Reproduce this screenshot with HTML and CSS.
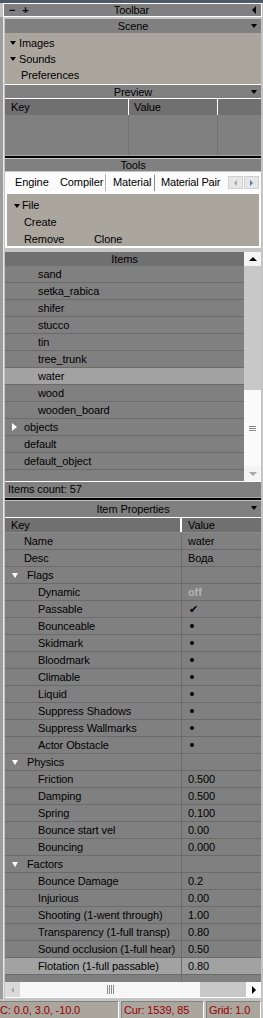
FILE: index.html
```html
<!DOCTYPE html>
<html lang="en">
<head>
    <meta charset="UTF-8">
    <title>Editor | Side Panel</title>
    <link rel="stylesheet" href="styles.css">
</head>
<body>
<div class="app">
    <div class="topline"></div>
    <div class="toolbar">
        <span class="tb-btns"><b>&minus;</b><b>+</b></span>
        <span class="tb-title">Toolbar</span>
        <span class="tri tri-left"></span>
    </div>

    <div class="dock">
        <div class="gap2"></div>
        <div class="hdr">Scene<span class="tri tri-down caret"></span></div>
        <div class="tree beige">
            <div class="tnode"><span class="tri tri-down"></span>Images</div>
            <div class="tnode"><span class="tri tri-down"></span>Sounds</div>
            <div class="tnode leaf">Preferences</div>
        </div>

        <div class="hdr hdr-top">Preview<span class="tri tri-down caret"></span></div>
        <div class="grid3 grid3-head">
            <div>Key</div><div>Value</div><div></div>
        </div>
        <div class="grid3 grid3-body">
            <div></div><div></div><div></div>
        </div>
        <div class="splitter"></div>

        <div class="hdr hdr-tools">Tools</div>
        <div class="tabs">
            <span class="tab t-engine">Engine</span>
            <span class="tab t-compiler">Compiler</span>
            <span class="tab t-material active">Material</span>
            <span class="tab t-pair">Material Pair</span>
            <span class="tab-arrows">
                <span class="tab-arrow"><span class="tri tri-left small grey"></span></span>
                <span class="tab-arrow"><span class="tri tri-right small blue"></span></span>
            </span>
        </div>
        <div class="tools-box beige">
            <div class="tnode"><span class="tri tri-down"></span>File</div>
            <div class="tnode sub">Create</div>
            <div class="tnode sub"><span class="cmd">Remove</span>Clone</div>
        </div>

        <div class="items">
            <div class="items-list">
                <div class="hdr hdr-dark">Items</div>
                <div class="row lvl1">sand</div>
                <div class="row lvl1">setka_rabica</div>
                <div class="row lvl1">shifer</div>
                <div class="row lvl1">stucco</div>
                <div class="row lvl1">tin</div>
                <div class="row lvl1">tree_trunk</div>
                <div class="row lvl1 selected">water</div>
                <div class="row lvl1">wood</div>
                <div class="row lvl1">wooden_board</div>
                <div class="row lvl0"><span class="tri tri-right white exp"></span>objects</div>
                <div class="row lvl0">default</div>
                <div class="row lvl0">default_object</div>
            </div>
            <div class="vscroll">
                <div class="sb-btn"><span class="tri tri-up"></span></div>
                <div class="sb-track"></div>
                <div class="sb-thumb"><span class="grip-h"></span></div>
                <div class="sb-btn"><span class="tri tri-down small grey"></span></div>
            </div>
        </div>
        <div class="count">Items count: 57</div>
        <div class="splitter"></div>

        <div class="hdr hdr-props">Item Properties<span class="tri tri-down caret"></span></div>
        <div class="props">
            <div class="prow phead"><span>Key</span><span>Value</span></div>
            <div class="prow"><span class="k0">Name</span><span>water</span></div>
            <div class="prow"><span class="k0">Desc</span><span>Вода</span></div>
            <div class="prow"><span class="k0"><span class="tri tri-down white mini exp"></span>Flags</span><span></span></div>
            <div class="prow"><span class="k1">Dynamic</span><span class="off">off</span></div>
            <div class="prow"><span class="k1">Passable</span><span class="check">&#10004;</span></div>
            <div class="prow"><span class="k1">Bounceable</span><span><i class="dot"></i></span></div>
            <div class="prow"><span class="k1">Skidmark</span><span><i class="dot"></i></span></div>
            <div class="prow"><span class="k1">Bloodmark</span><span><i class="dot"></i></span></div>
            <div class="prow"><span class="k1">Climable</span><span><i class="dot"></i></span></div>
            <div class="prow"><span class="k1">Liquid</span><span><i class="dot"></i></span></div>
            <div class="prow"><span class="k1">Suppress Shadows</span><span><i class="dot"></i></span></div>
            <div class="prow"><span class="k1">Suppress Wallmarks</span><span><i class="dot"></i></span></div>
            <div class="prow"><span class="k1">Actor Obstacle</span><span><i class="dot"></i></span></div>
            <div class="prow"><span class="k0"><span class="tri tri-down white mini exp"></span>Physics</span><span></span></div>
            <div class="prow"><span class="k1">Friction</span><span>0.500</span></div>
            <div class="prow"><span class="k1">Damping</span><span>0.500</span></div>
            <div class="prow"><span class="k1">Spring</span><span>0.100</span></div>
            <div class="prow"><span class="k1">Bounce start vel</span><span>0.00</span></div>
            <div class="prow"><span class="k1">Bouncing</span><span>0.000</span></div>
            <div class="prow"><span class="k0"><span class="tri tri-down white mini exp"></span>Factors</span><span></span></div>
            <div class="prow"><span class="k1">Bounce Damage</span><span>0.2</span></div>
            <div class="prow"><span class="k1">Injurious</span><span>0.00</span></div>
            <div class="prow"><span class="k1">Shooting (1-went through)</span><span>1.00</span></div>
            <div class="prow"><span class="k1">Transparency (1-full transp)</span><span>0.80</span></div>
            <div class="prow"><span class="k1">Sound occlusion (1-full hear)</span><span>0.50</span></div>
            <div class="prow selected"><span class="k1">Flotation (1-full passable)</span><span>0.80</span></div>
            <div class="prow empty"><span></span><span></span></div>
        </div>
        <div class="hscroll">
            <div class="hs-btn"><span class="tri tri-left small grey"></span></div>
            <div class="hs-thumb"><span class="grip-v"></span></div>
            <div class="hs-track"></div>
            <div class="hs-btn white-btn"><span class="tri tri-right"></span></div>
        </div>
    </div>

    <div class="status">
        <span class="cell c1">C: 0.0, 3.0, -10.0</span>
        <span class="cell c2">Cur: 1539, 85</span>
        <span class="cell c3">Grid: 1.0</span>
    </div>
</div>
</body>
</html>
```

FILE: styles.css
```css
:root {
    --hdr: #808080;
    --hdr-dark: #707070;
    --row: #808080;
    --row-line: #6b6b6b;
    --sel: #a2a2a2;
    --beige: #aaa69e;
    --track: #c8c8c8;
    --status-text: #9a0000;
}
* { box-sizing: border-box; }
body {
    margin: 0;
    background: #c4c4c4;
    font-family: 'Liberation Sans', Arial, sans-serif;
    font-size: 11px;
    letter-spacing: -0.1px;
    color: #000;
}
.app {
    width: 263px;
    height: 1018px;
    display: flex;
    flex-direction: column;
    overflow: hidden;
}
.topline {
    height: 3px;
    background: #4c5864;
}
.toolbar {
    height: 14px;
    margin: 0 1px 0 3px;
    border: 1px solid #fff;
    background: var(--hdr);
    display: flex;
    align-items: center;
    padding: 0 5px 0 5px;
    line-height: 12px;
}
.tb-btns {
    display: flex;
    gap: 7px;
    width: 40px;
    font-weight: bold;
}
.tb-title {
    flex: 1;
    text-align: center;
    padding-right: 38px;
}

/* dock area with ruler-like left edge */
.dock {
    flex: 1;
    display: flex;
    flex-direction: column;
    padding: 0 2px 0 5px;
    background:
        linear-gradient(to right, #9d9d9d 0, #9d9d9d 3px, #e8e8e8 3px, #e8e8e8 4px, transparent 4px),
        #c4c4c4;
}
.gap2 { height: 2px; }

.hdr {
    position: relative;
    height: 14px;
    line-height: 14px;
    text-align: center;
    background: var(--hdr);
}
.hdr-top { border-top: 1px solid #fff; }
.hdr-tools { height: 12px; line-height: 12px; }
.hdr-dark { background: var(--hdr-dark); height: 14px; }
.hdr-props { height: 16px; line-height: 16px; }
.caret {
    position: absolute;
    right: 4px;
    top: 5px;
}

/* triangles */
.tri {
    display: inline-block;
    flex: none;
    width: 0;
    height: 0;
    border-style: solid;
    border-color: transparent;
    vertical-align: middle;
}
.tri-down { border-width: 4px 3.5px 0 3.5px; border-top-color: #000; }
.tri-up { border-width: 0 4px 4px 4px; border-bottom-color: #000; }
.tri-left { border-width: 4px 4px 4px 0; border-right-color: #000; }
.tri-right { border-width: 4px 0 4px 4px; border-left-color: #000; }
.tri.small.tri-left { border-width: 3px 3px 3px 0; }
.tri.small.tri-right { border-width: 3px 0 3px 3px; }
.tri.small.tri-down { border-width: 4px 4px 0 4px; }
.tri.grey.tri-left { border-right-color: #a8a8a8; }
.tri.grey.tri-down { border-top-color: #a8a8a8; }
.tri.blue.tri-right { border-left-color: #5a78b4; }
.tri.white.tri-right { border-left-color: #fff; border-width: 4px 0 4px 5px; }
.tri.white.tri-down { border-top-color: #fff; }
.tri.mini.tri-down { border-width: 5px 3px 0 3px; }

/* scene tree */
.beige { background: var(--beige); }
.tree {
    height: 51px;
    padding: 2px 0 0 0;
}
.tnode {
    height: 16px;
    line-height: 16px;
    padding-left: 5px;
    display: flex;
    align-items: center;
}
.tnode .tri { margin: 0 3px 0 0; }
.tnode.leaf { padding-left: 16px; }

/* preview table */
.grid3 {
    display: grid;
    grid-template-columns: 124px 89px 1fr;
}
.grid3-head {
    height: 17px;
    border-top: 1px solid #fff;
    background: var(--hdr-dark);
    line-height: 16px;
}
.grid3-head div { padding-left: 6px; border-right: 1px solid #fff; }
.grid3-head div:nth-child(2) { padding-left: 5px; }
.grid3-body {
    height: 40px;
    background: var(--row);
}
.grid3-body div { border-right: 1px solid #727272; }
.grid3-body div:last-child, .grid3-head div:last-child { border-right: none; }

.splitter {
    height: 4px;
    border-top: 1px solid #a6a6a6;
    border-bottom: 1px solid #c4c4c4;
    background: #000;
}

/* tools */
.tabs {
    height: 20px;
    margin-top: 1px;
    padding: 2px 0 0 0;
    display: flex;
    align-items: stretch;
    background: #fbfbfb;
    border-bottom: 1px solid #fff;
    overflow: hidden;
}
.tab {
    flex: none;
    white-space: nowrap;
    line-height: 16px;
}
.t-engine { width: 50px; padding-left: 10px; }
.t-compiler { width: 51px; padding-left: 5px; }
.t-material { width: 49px; padding-left: 6px; }
.t-pair { width: 73px; padding-left: 6px; letter-spacing: -0.2px; }
.tab.active {
    border-left: 1px solid #fff;
    border-right: 1px solid #8c8c8c;
    border-top: 1px solid #fff;
    box-shadow: -1px 0 0 #b4b4b4;
    line-height: 15px;
}
.tab-arrows {
    flex: none;
    display: flex;
    align-items: center;
    gap: 1px;
}
.tab-arrow {
    width: 15px;
    height: 13px;
    display: flex;
    align-items: center;
    justify-content: center;
    background: #e6e6e6;
    border: 1px solid #d0d0d0;
}
.tools-box {
    height: 56px;
    border: 2px solid #fff;
    padding: 3px 0 0 0;
}
.tools-box .tnode { height: 17px; line-height: 17px; padding-left: 7px; }
.tools-box .tnode .tri { margin-right: 2px; }
.tools-box .sub { padding-left: 17px; }
.cmd { width: 70px; }

/* items list */
.items {
    margin-top: 4px;
    display: flex;
    height: 229px;
    background: var(--row);
}
.items-list {
    flex: 1;
    overflow: hidden;
}
.row {
    height: 17px;
    line-height: 16px;
    border-bottom: 1px solid var(--row-line);
    display: flex;
    align-items: center;
}
.row.lvl1 { padding-left: 33px; }
.row.lvl0 { padding-left: 19px; }
.row.selected, .prow.selected { background: var(--sel); }
.exp { margin-left: -12px; margin-right: 7px; }
.vscroll {
    width: 17px;
    display: flex;
    flex-direction: column;
    background: var(--track);
}
.sb-btn {
    height: 14px;
    display: flex;
    align-items: center;
    justify-content: center;
    background: #f4f4f4;
}
.sb-btn:last-child { height: 15px; background: #f4f4f4; }
.sb-track { height: 124px; }
.sb-thumb {
    height: 76px;
    background: #fafafa;
    display: flex;
    align-items: center;
    justify-content: center;
}
.grip-h {
    width: 7px;
    height: 5px;
    background: repeating-linear-gradient(to bottom, #8a8a8a 0, #8a8a8a 1px, transparent 1px, transparent 2px);
}
.count {
    height: 16px;
    line-height: 15px;
    border-top: 1px solid #fff;
    background: var(--row);
    padding-left: 3px;
}

/* properties */
.props {
    background: var(--row);
    border-top: 1px solid #fff;
}
.prow {
    display: grid;
    grid-template-columns: 177px 1fr;
    height: 17px;
    line-height: 16px;
    border-bottom: 1px solid var(--row-line);
}
.prow > span:first-child { border-right: 1px solid var(--row-line); white-space: nowrap; }
.prow > span:last-child { padding-left: 6px; display: flex; align-items: center; }
.phead {
    height: 15px;
    line-height: 14px;
    background: var(--hdr-dark);
    border-bottom: 1px solid #8a8a8a;
}
.phead > span:first-child { padding-left: 6px; border-right: 2px solid #fff; }
.k0 { padding-left: 19px; display: flex; align-items: center; }
.k1 { padding-left: 33px; }
.k0 .exp { margin-left: -12px; margin-right: 9px; }
.off { color: #b4b4b4; font-weight: bold; }
.check { font-size: 11px; padding-left: 7px !important; }
.dot {
    display: inline-block;
    width: 4px;
    height: 4px;
    border-radius: 50%;
    background: #000;
    margin-left: 2px;
}
.prow.empty { height: 7px; border-bottom: none; }

.hscroll {
    height: 16px;
    display: flex;
    background: var(--track);
    border-bottom: 1px solid #fff;
}
.hs-btn {
    width: 15px;
    display: flex;
    align-items: center;
    justify-content: center;
    background: #dadada;
}
.white-btn { background: #fafafa; }
.hs-thumb {
    width: 180px;
    background: #f6f6f6;
    display: flex;
    align-items: center;
    justify-content: center;
}
.grip-v {
    width: 7px;
    height: 9px;
    background: repeating-linear-gradient(to right, #8a8a8a 0, #8a8a8a 1px, transparent 1px, transparent 2px);
}
.hs-track { flex: 1; }

/* status bar */
.status {
    height: 19px;
    display: flex;
    gap: 2px;
    padding: 2px 2px 0 0;
    background: #c4c4c4;
}
.cell {
    height: 17px;
    line-height: 16px;
    background: var(--beige);
    color: var(--status-text);
    border-top: 1px solid #808080;
    border-left: 1px solid #808080;
    border-right: 1px solid #fff;
    white-space: nowrap;
    overflow: hidden;
}
.c1 { width: 119px; padding-left: 0; border-left: none; }
.c2 { width: 83px; padding-left: 2px; }
.c3 { flex: 1; padding-left: 2px; }
```
